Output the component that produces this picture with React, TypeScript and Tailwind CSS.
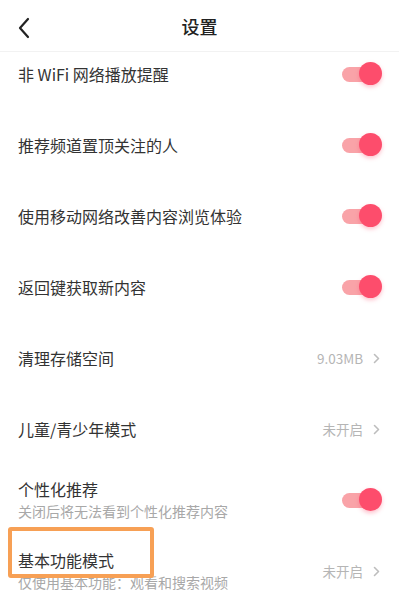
import React from 'react';

type Row =
  | { kind: 'toggle'; title: string; sub?: string }
  | { kind: 'link'; title: string; value: string; sub?: string; highlight?: boolean };

const rows: Row[] = [
  { kind: 'toggle', title: '非 WiFi 网络播放提醒' },
  { kind: 'toggle', title: '推荐频道置顶关注的人' },
  { kind: 'toggle', title: '使用移动网络改善内容浏览体验' },
  { kind: 'toggle', title: '返回键获取新内容' },
  { kind: 'link', title: '清理存储空间', value: '9.03MB' },
  { kind: 'link', title: '儿童/青少年模式', value: '未开启' },
  { kind: 'toggle', title: '个性化推荐', sub: '关闭后将无法看到个性化推荐内容' },
  { kind: 'link', title: '基本功能模式', value: '未开启', sub: '仅使用基本功能：观看和搜索视频', highlight: true },
];

function Toggle() {
  return (
    <div className="relative w-[40px] h-[24px] flex items-center">
      <div className="w-[32px] h-[15px] rounded-full bg-[#f9a3a8]" />
      <div className="absolute right-0 top-0 w-[23px] h-[23px] rounded-full bg-[#fd4d6c] shadow-[0_2px_4px_rgba(253,77,108,0.35)]" />
    </div>
  );
}

function Chevron() {
  return (
    <svg width="7" height="11" viewBox="0 0 7 11" fill="none">
      <path d="M1.5 1.5 L5.5 5.5 L1.5 9.5" stroke="#bdbdbd" strokeWidth="1.6" strokeLinecap="round" strokeLinejoin="round" />
    </svg>
  );
}

export default function App() {
  return (
    <div
      className="w-[399px] h-[594px] overflow-hidden bg-white text-[#333]"
      style={{ fontFamily: '"Noto Sans CJK SC", "Noto Sans", sans-serif' }}
    >
      {/* Header */}
      <div className="relative h-[52px] flex items-center justify-center border-b border-[#f2f2f2]">
        <div className="absolute left-[17px] top-[17px]">
          <svg width="14" height="22" viewBox="0 0 14 22" fill="none">
            <path d="M11 2 L3 11 L11 20" stroke="#222" strokeWidth="2.2" strokeLinecap="round" strokeLinejoin="round" />
          </svg>
        </div>
        <h1 className="text-[18px] font-medium text-[#222] leading-none">设置</h1>
      </div>

      <div className="pl-[18px]">
        {rows.map((row) => (
          <div key={row.title} className="relative flex items-center h-[44px] mb-[27px]">
            {row.kind === 'link' && row.highlight && (
              <div className="absolute left-[-10px] top-[-22px] w-[146px] h-[51px] border-[4px] border-[#f7a055] rounded-[3px]" />
            )}
            <div className="flex-1 flex flex-col">
              <span className="text-[16px] leading-[22px]">{row.title}</span>
              {row.sub && <span className="text-[14px] leading-[22px] text-[#a8a8a8]">{row.sub}</span>}
            </div>
            {row.kind === 'toggle' ? (
              <div className="pr-[17px]">
                <Toggle />
              </div>
            ) : (
              <div className="flex items-center gap-[10px] pr-[19px]">
                <span className="text-[13.5px] text-[#b5b5b5]">{row.value}</span>
                <Chevron />
              </div>
            )}
          </div>
        ))}
      </div>
    </div>
  );
}
